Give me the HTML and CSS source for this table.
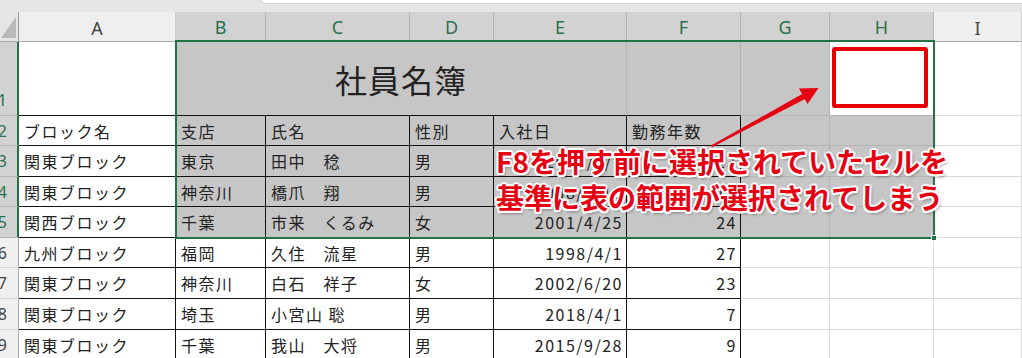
FILE: index.html
```html
<!DOCTYPE html>
<html lang="ja">
<head>
<meta charset="utf-8">
<title>社員名簿</title>
<link rel="stylesheet" href="styles.css">
</head>
<body>
<div class="page">
  <div class="top"><div class="topbox"></div></div>
  <div class="sheet">
    <div class="corner"><span class="tri"></span></div>
    <div class="ch">A</div>
    <div class="ch s">B</div>
    <div class="ch s">C</div>
    <div class="ch s">D</div>
    <div class="ch s">E</div>
    <div class="ch s">F</div>
    <div class="ch s">G</div>
    <div class="ch s">H</div>
    <div class="ch">I</div>

    <div class="rh s r1">1</div>
    <div class="c bb"></div>
    <div class="c sel bb title">社員名簿</div>
    <div class="c sel bb"></div>
    <div class="c sel"></div>
    <div class="c act"></div>
    <div class="c"></div>

    <div class="rh s">2</div>
    <div class="c t">ブロック名</div>
    <div class="c t sel">支店</div>
    <div class="c t sel">氏名</div>
    <div class="c t sel">性別</div>
    <div class="c t sel">入社日</div>
    <div class="c t sel">勤務年数</div>
    <div class="c sel"></div>
    <div class="c sel"></div>
    <div class="c"></div>

    <div class="rh s">3</div>
    <div class="c t">関東ブロック</div>
    <div class="c t sel">東京</div>
    <div class="c t sel">田中　稔</div>
    <div class="c t sel">男</div>
    <div class="c t sel n">2012/4/1</div>
    <div class="c t sel n">13</div>
    <div class="c sel"></div>
    <div class="c sel"></div>
    <div class="c"></div>

    <div class="rh s">4</div>
    <div class="c t">関東ブロック</div>
    <div class="c t sel">神奈川</div>
    <div class="c t sel">橋爪　翔</div>
    <div class="c t sel">男</div>
    <div class="c t sel n">2008/4/10</div>
    <div class="c t sel n">17</div>
    <div class="c sel"></div>
    <div class="c sel"></div>
    <div class="c"></div>

    <div class="rh s">5</div>
    <div class="c t">関西ブロック</div>
    <div class="c t sel">千葉</div>
    <div class="c t sel">市来　くるみ</div>
    <div class="c t sel">女</div>
    <div class="c t sel n">2001/4/25</div>
    <div class="c t sel n">24</div>
    <div class="c sel"></div>
    <div class="c sel"></div>
    <div class="c"></div>

    <div class="rh">6</div>
    <div class="c t">九州ブロック</div>
    <div class="c t">福岡</div>
    <div class="c t">久住　流星</div>
    <div class="c t">男</div>
    <div class="c t n">1998/4/1</div>
    <div class="c t n">27</div>
    <div class="c"></div>
    <div class="c"></div>
    <div class="c"></div>

    <div class="rh">7</div>
    <div class="c t">関東ブロック</div>
    <div class="c t">神奈川</div>
    <div class="c t">白石　祥子</div>
    <div class="c t">女</div>
    <div class="c t n">2002/6/20</div>
    <div class="c t n">23</div>
    <div class="c"></div>
    <div class="c"></div>
    <div class="c"></div>

    <div class="rh">8</div>
    <div class="c t">関東ブロック</div>
    <div class="c t">埼玉</div>
    <div class="c t">小宮山 聡</div>
    <div class="c t">男</div>
    <div class="c t n">2018/4/1</div>
    <div class="c t n">7</div>
    <div class="c"></div>
    <div class="c"></div>
    <div class="c"></div>

    <div class="rh">9</div>
    <div class="c t">関東ブロック</div>
    <div class="c t">千葉</div>
    <div class="c t">我山　大将</div>
    <div class="c t">男</div>
    <div class="c t n">2015/9/28</div>
    <div class="c t n">9</div>
    <div class="c"></div>
    <div class="c"></div>
    <div class="c"></div>
  </div>

  <div class="selection"></div>
  <div class="handle"></div>
  <div class="redbox"></div>
  <svg class="arrow" width="1022" height="358" viewBox="0 0 1022 358">
    <polygon points="712,147.2 711,145.6 803,93.5 806,98.5" fill="#e60012"/>
    <polygon points="818.5,88 799,88.5 807.5,104" fill="#e60012"/>
  </svg>
  <div class="callout">F8を押す前に選択されていたセルを<br>基準に表の範囲が選択されてしまう</div>
</div>
</body>
</html>
```

FILE: styles.css
```css
html, body {
  margin: 0;
  padding: 0;
  background: #ffffff;
}
body {
  width: 1022px;
  height: 358px;
  overflow: hidden;
  font-family: "Noto Sans CJK JP", "Noto Sans", sans-serif;
}
.page {
  position: relative;
  width: 1022px;
  height: 358px;
  overflow: hidden;
}
.top {
  height: 12px;
  background: #e6e6e6;
  display: flex;
  justify-content: flex-end;
}
.topbox {
  width: 760px;
  height: 3px;
  background: #ffffff;
  border-bottom-left-radius: 4px;
  border-left: 1px solid #d6d6d6;
  border-bottom: 1px solid #d6d6d6;
}
.sheet {
  display: grid;
  grid-template-columns: 19px 157px 90px 144px 84px 133px 114px 89px 104px 88px;
  grid-template-rows: 30px 74px 30px 31px 30px 31px 30px 31px 31px 31px;
}
.corner {
  position: relative;
  background: #e6e6e6;
  border-right: 1px solid #9a9a9a;
  border-bottom: 1px solid #ababab;
  box-sizing: border-box;
}
.tri {
  position: absolute;
  right: 2px;
  bottom: 3px;
  width: 0;
  height: 0;
  border-left: 15px solid transparent;
  border-bottom: 21px solid #b9b9b9;
}
.ch {
  box-sizing: border-box;
  background: #efefef;
  border-right: 1px solid #d0d0d0;
  border-bottom: 1px solid #ababab;
  display: flex;
  align-items: center;
  justify-content: center;
  font-family: "Noto Sans", sans-serif;
  font-size: 18px;
  color: #444444;
  padding-top: 2px;
}
.ch.s {
  background: #d2d2d2;
  color: #2b6f4d;
  border-right-color: #b6b6b6;
  border-bottom: 2px solid #217346;
}
.rh {
  box-sizing: border-box;
  background: #f0f0f0;
  border-right: 1px solid #a8a8a8;
  border-bottom: 1px solid #d4d4d4;
  display: flex;
  align-items: center;
  justify-content: flex-end;
  padding-right: 11px;
  overflow: hidden;
  font-family: "Noto Sans", sans-serif;
  font-size: 16px;
  color: #444444;
}
.rh.s {
  background: #d2d2d2;
  color: #2b6f4d;
  border-right: 2px solid #217346;
  border-bottom-color: #b6b6b6;
  padding-right: 10px;
}
.rh.r1 {
  align-items: flex-end;
  padding-bottom: 4px;
}
.c {
  box-sizing: border-box;
  background: #ffffff;
  border-right: 1px solid #dadada;
  border-bottom: 1px solid #dadada;
  display: flex;
  align-items: center;
  padding: 0 3px 0 5px;
  font-size: 16px;
  letter-spacing: 1.5px;
  color: #222222;
  white-space: nowrap;
  overflow: hidden;
}
.c.sel {
  background: #c6c6c6;
  border-right-color: #b4b4b4;
  border-bottom-color: #b4b4b4;
}
.c.bb {
  border-bottom-color: #111111;
}
.c.t {
  border-right-color: #111111;
  border-bottom-color: #111111;
}
.c.n {
  justify-content: flex-end;
}
.c.title {
  grid-column: span 4;
  justify-content: center;
  font-size: 32px;
  letter-spacing: 1px;
  padding: 0;
}
.c.act {
  background: #ffffff;
  border-right-color: #dadada;
  border-bottom-color: #b4b4b4;
}
.selection {
  position: absolute;
  left: 175px;
  top: 40px;
  width: 760px;
  height: 199px;
  box-sizing: border-box;
  border: 2px solid #217346;
}
.handle {
  position: absolute;
  left: 931px;
  top: 235px;
  width: 6px;
  height: 6px;
  box-sizing: border-box;
  background: #217346;
  border: 1px solid #ffffff;
}
.redbox {
  position: absolute;
  left: 832px;
  top: 47px;
  width: 96px;
  height: 61px;
  box-sizing: border-box;
  border: 4px solid #e60000;
  border-radius: 3px;
}
.arrow {
  position: absolute;
  left: 0;
  top: 0;
}
.callout {
  position: absolute;
  left: 496px;
  top: 143px;
  font-family: "Noto Sans CJK JP", sans-serif;
  font-weight: 700;
  font-size: 28px;
  line-height: 36px;
  color: #e60012;
  white-space: nowrap;
  text-shadow:
    2px 0 0 #fff, -2px 0 0 #fff, 0 2px 0 #fff, 0 -2px 0 #fff,
    1.5px 1.5px 0 #fff, -1.5px 1.5px 0 #fff, 1.5px -1.5px 0 #fff, -1.5px -1.5px 0 #fff,
    2px 3px 3px rgba(0, 0, 0, 0.35);
}
```
